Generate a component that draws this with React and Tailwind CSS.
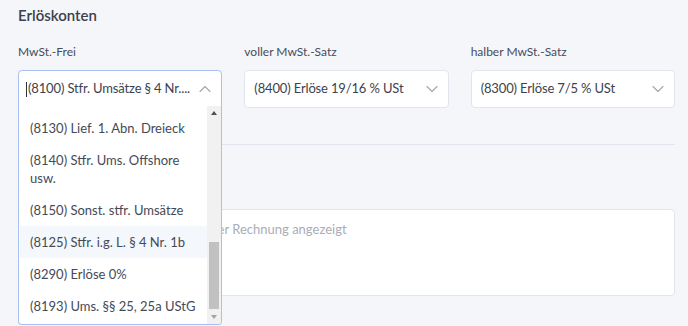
import { ChevronDown, ChevronUp } from "lucide-react";

const items = [
  { label: "(8130) Lief. 1. Abn. Dreieck" },
  { label: "(8140) Stfr. Ums. Offshore usw." },
  { label: "(8150) Sonst. stfr. Umsätze" },
  { label: "(8125) Stfr. i.g. L. § 4 Nr. 1b", active: true },
  { label: "(8290) Erlöse 0%" },
  { label: "(8193) Ums. §§ 25, 25a UStG" },
];

function Field({ label, value, open }) {
  return (
    <div>
      <p className="text-[12px] leading-4 text-[#474c58] mb-[10px]">{label}</p>
      <div className="relative">
        <div
          className={
            open
              ? "h-[38px] flex items-center pl-[7px] pr-[6px] bg-white border border-[#a8c0f3] rounded-t-[4px]"
              : "h-[38px] flex items-center pl-[9px] pr-[6px] bg-white border border-[#e3e5ee] rounded-[4px]"
          }
        >
          {open && <span className="w-px h-[15px] bg-[#333] mr-px shrink-0" />}
          <span className="flex-1 min-w-0 whitespace-nowrap text-[13px] tracking-[-0.15px] text-[#3d424e]">{value}</span>
          {open ? (
            <ChevronUp size={20} strokeWidth={1.3} className="text-[#a3a7b0] shrink-0" />
          ) : (
            <ChevronDown size={20} strokeWidth={1.3} className="text-[#a3a7b0] shrink-0" />
          )}
        </div>
        {open && (
          <div className="absolute left-0 right-0 top-[36px] h-[219px] z-10 bg-white border border-t-0 border-[#a8c0f3] rounded-b-[4px] flex overflow-hidden">
            <div className="flex-1 pt-[6px] pl-px">
              {items.map((it) => (
                <div
                  key={it.label}
                  className={
                    "px-[10px] py-[7px] text-[13px] leading-[18px] text-[#454a56] " +
                    (it.active ? "bg-[#f4f8fc]" : "")
                  }
                >
                  {it.label}
                </div>
              ))}
            </div>
            <div className="w-[14px] bg-[#f1f1f1] flex flex-col items-center">
              <div className="h-[14px] flex items-center justify-center">
                <div className="w-0 h-0 border-l-[3.5px] border-r-[3.5px] border-b-[4px] border-l-transparent border-r-transparent border-b-[#505050]" />
              </div>
              <div className="flex-1 w-full px-[2px] flex flex-col justify-end pb-px">
                <div className="h-[67px] bg-[#c1c1c1]" />
              </div>
              <div className="h-[14px] flex items-center justify-center">
                <div className="w-0 h-0 border-l-[3.5px] border-r-[3.5px] border-t-[4px] border-l-transparent border-r-transparent border-t-[#a3a3a3]" />
              </div>
            </div>
          </div>
        )}
      </div>
    </div>
  );
}

export default function App() {
  return (
    <div className="w-[688px] h-[326px] overflow-hidden bg-[#f5f6fa]" style={{ fontFamily: "Lato, 'Open Sans', sans-serif" }}>
      <div className="ml-[18px] w-[657px] pt-[6px]">
        <h2 className="text-[15px] leading-[18px] font-semibold text-[#3b404c]">Erlöskonten</h2>
        <div className="grid grid-cols-3 gap-x-[22px] mt-[20px]">
          <Field label="MwSt.-Frei" value="(8100) Stfr. Umsätze § 4 Nr...." open />
          <Field label="voller MwSt.-Satz" value="(8400) Erlöse 19/16 % USt" />
          <Field label="halber MwSt.-Satz" value="(8300) Erlöse 7/5 % USt" />
        </div>
        <div className="mt-[36px] border-t border-[#e3e5ee]" />
        <div className="h-[64px]" />
        <div className="h-[87px] bg-white border border-[#e3e5ee] rounded-[4px] px-[10px] pt-[8px] leading-5">
          <span className="text-[13px] text-[#a9adb6] whitespace-nowrap">Dieser Text wird am Ende unter der Rechnung angezeigt</span>
        </div>
      </div>
    </div>
  );
}
